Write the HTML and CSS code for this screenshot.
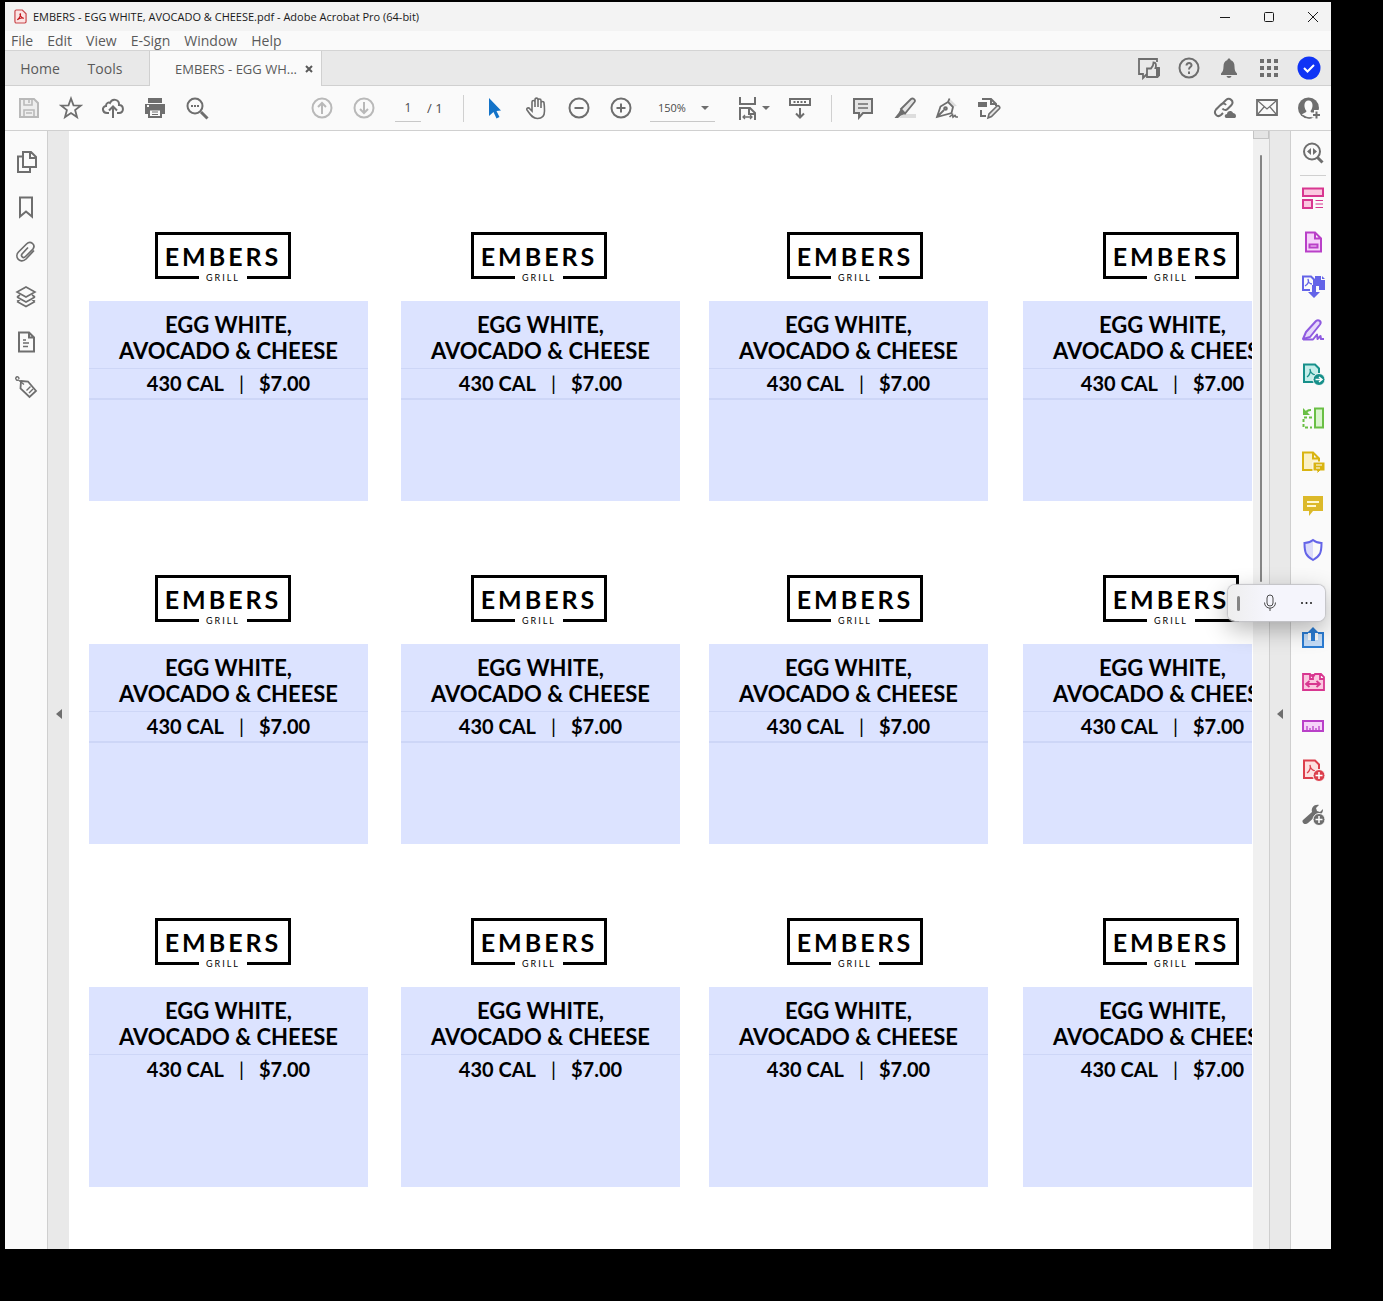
FILE: index.html
```
<!DOCTYPE html>
<html lang="en">
<head>
  <meta charset="UTF-8">
  <meta name="viewport" content="width=device-width, initial-scale=1.0">
  <title>EMBERS - EGG WHITE, AVOCADO &amp; CHEESE.pdf</title>
  <link rel="stylesheet" href="styles.css">
</head>
<body>
  <div class="window">
    <header class="title-bar">
      <svg class="app-icon" viewBox="0 0 14 16"><path d="M2.500 1h6.500l4 4v8.500a1.500 1.500 0 0 1-1.500 1.500h-9A1.500 1.500 0 0 1 1 13.500v-11A1.500 1.500 0 0 1 2.500 1z" fill="#fbe3e3" stroke="#c9474b" stroke-width="1.300"/><path d="M3.500 11.500c2-1 4-4.500 3.500-6.500-1.500 0 0 4.500 3.500 5-2-.8-5 0-7 1.500z" fill="none" stroke="#c4161c" stroke-width="1.200"/></svg>
      <h1 class="title">EMBERS - EGG WHITE, AVOCADO &amp; CHEESE.pdf - Adobe Acrobat Pro (64-bit)</h1>
      <div class="window-buttons">
        <button aria-label="Minimize"><svg viewBox="0 0 12 12"><path d="M1 6.500h10"/></svg></button>
        <button aria-label="Maximize"><svg viewBox="0 0 12 12"><rect x="1.500" y="1.500" width="9" height="9" rx="1"/></svg></button>
        <button aria-label="Close"><svg viewBox="0 0 12 12"><path d="M1 1l10 10M11 1L1 11"/></svg></button>
      </div>
    </header>

    <nav class="menu-bar">
      <button>File</button>
      <button>Edit</button>
      <button>View</button>
      <button>E-Sign</button>
      <button>Window</button>
      <button>Help</button>
    </nav>

    <div class="tab-bar">
      <button class="tab">Home</button>
      <button class="tab">Tools</button>
      <div class="tab-active">
        <span>EMBERS - EGG WH...</span>
        <button aria-label="Close tab"><svg viewBox="0 0 8 8"><path d="M1 1l6 6M7 1L1 7"/></svg></button>
      </div>
      <div class="tab-tools">
        <button aria-label="Feedback"><svg class="icon" viewBox="0 0 24 24"><path d="M20 6V3H2v15h4v4l4-4" stroke-width="1.800"/><path d="M10 12.500h4c1.500-1.500 2.500-3 2.500-6 2.500 0 3 2.500 2 5.500H22v7.500l-1.500 1.500H10z" fill="#e9e9e9" stroke-width="1.800"/><path d="M19 12h4v8h-4z" fill="#6e6e6e" stroke="none"/></svg></button>
        <button aria-label="Help"><svg class="icon" viewBox="0 0 24 24"><circle cx="12" cy="12" r="9.500"/><path d="M9.500 9.500c0-3.500 5.500-3 5 0-.3 1.700-2.500 1.700-2.500 4M12 15.500V18"/></svg></button>
        <button aria-label="Notifications"><svg class="icon solid" viewBox="0 0 24 24"><path d="M12 2.500c1 0 1.500.5 1.500 1.500 3 .8 4 3.500 4 6.500 0 4 1 5.500 2.500 7V19H4v-1.500c1.500-1.500 2.500-3 2.500-7 0-3 1-5.700 4-6.500 0-1 .5-1.500 1.500-1.500zM9.500 20h5c-.5 2.500-4.500 2.500-5 0z"/></svg></button>
        <button aria-label="Apps"><svg class="icon solid" viewBox="0 0 24 24"><path d="M3 3h4v4H3zM10 3h4v4h-4zM17 3h4v4h-4zM3 10h4v4H3zM10 10h4v4h-4zM17 10h4v4h-4zM3 17h4v4H3zM10 17h4v4h-4zM17 17h4v4h-4z"/></svg></button>
        <button aria-label="Account"><svg class="icon" viewBox="0 0 24 24"><circle cx="12" cy="12" r="11.500" fill="#1034f5" stroke="none"/><path d="M7 12l3.500 3.500L17 9" stroke="#fff"/></svg></button>
      </div>
    </div>

    <div class="toolbar">
      <div class="tool-group">
        <button aria-label="Save"><svg class="icon faded" viewBox="0 0 24 24"><path d="M3 3h14l4 4v14H3z" fill="#eee"/><path d="M7 3v6h8V3M12 4v3M7 21v-7h10v7M9 17h6" stroke-width="1.600"/></svg></button>
        <button aria-label="Star"><svg class="icon" viewBox="0 0 24 24"><path d="M12 2.500l2.500 6.800 7.200.3-5.600 4.500 1.900 7-6-4-6 4 1.900-7-5.600-4.500 7.200-.3z" stroke-width="1.800"/></svg></button>
        <button aria-label="Upload"><svg class="icon" viewBox="0 0 24 24"><path d="M8 17H6c-5 0-5.500-6.500-1-7 0-3 2.500-4 4-3 2-5 9.500-4 9 2 5 0 5.500 8 0 8h-2M12 22V11M8 14.500l4-4 4 4"/></svg></button>
        <button aria-label="Print"><svg class="icon" viewBox="0 0 24 24"><path d="M5 2h14v5H5z" fill="#6e6e6e" stroke="none"/><path d="M2 8h20v10H2z" fill="#6e6e6e" stroke="none"/><path d="M6 13.500h12V21H6z" fill="#fafafa"/><path d="M4 10h2" stroke="#fafafa"/><path d="M9 16h6M9 18.500h6" stroke-width="1"/></svg></button>
        <button aria-label="Find"><svg class="icon" viewBox="0 0 24 24"><circle cx="10" cy="10" r="7.500"/><path d="M16 16l6.500 6.500" stroke-width="3"/><path d="M6 10h2M9 10h2M12 10h2"/></svg></button>
      </div>
      <div class="tool-group page-group">
        <button aria-label="Previous page"><svg class="icon faded" viewBox="0 0 24 24"><circle cx="12" cy="12" r="9.500"/><path d="M12 18V7M8 11l4-4 4 4"/></svg></button>
        <button aria-label="Next page"><svg class="icon faded" viewBox="0 0 24 24"><circle cx="12" cy="12" r="9.500"/><path d="M12 6v11M8 13l4 4 4-4"/></svg></button>
        <input class="page-input" id="page" type="text" value="1" aria-label="Page">
        <label class="page-total" for="page">/ 1</label>
      </div>
      <div class="tool-group divided">
        <button aria-label="Select"><svg class="icon" viewBox="0 0 24 24"><path d="M6 2l12 12.500-4.500.5 3 6-3 1.500-3-6.500L6 20z" fill="#1473c8" stroke="none"/></svg></button>
        <button aria-label="Hand"><svg class="icon" viewBox="0 0 24 24"><path d="M7 15V6c0-2 3-2 3 0v5V4c0-2.500 3-2.500 3 0v7V4.500c0-2 3-2 3 0V12 7c0-2 3-2 3 0 .5 3 .5 6 .5 8 0 5-3 7.500-7 7.500C7 22.500 5 18 2 14c-1-2 1.500-3 3-1l2 2z" stroke-width="1.600"/></svg></button>
        <button aria-label="Zoom out"><svg class="icon" viewBox="0 0 24 24"><circle cx="12" cy="12" r="9.500"/><path d="M7.500 12h9"/></svg></button>
        <button aria-label="Zoom in"><svg class="icon" viewBox="0 0 24 24"><circle cx="12" cy="12" r="9.500"/><path d="M7.500 12h9M12 7.500v9"/></svg></button>
      </div>
      <div class="zoom">
        <select aria-label="Zoom"><option>150%</option></select>
        <svg class="caret" viewBox="0 0 8 4"><path d="M0 0h8L4 4z"/></svg>
      </div>
      <div class="tool-group">
        <button class="fit-button" aria-label="Fit width"><svg class="icon" viewBox="0 0 24 24"><path d="M4 1v7h15V1M4 24V12h10l5 5v7M13 12v6h6"/><path d="M7 21h9M9 19l-2 2 2 2M14 19l2 2-2 2" stroke-width="1.300"/></svg><svg class="caret" viewBox="0 0 8 4"><path d="M0 0h8L4 4z"/></svg></button>
        <button aria-label="Scroll mode"><svg class="icon" viewBox="0 0 24 24"><path d="M2 3h20v6H2z"/><path d="M5.500 6h2M9 6h2M12.500 6h2M16 6h2M12 12v9M8 17.500l4 4 4-4"/></svg></button>
      </div>
      <div class="tool-group divided">
        <button aria-label="Comment"><svg class="icon" viewBox="0 0 24 24"><path d="M3 3h18v14h-9l-4 4.500V17H3z" fill="#e4e4e4"/><path d="M7 8h10M7 12h10" stroke-width="1.300"/></svg></button>
        <button aria-label="Highlight"><svg class="icon" viewBox="0 0 24 24"><path d="M10 18h13v4H6z" fill="#ddd" stroke="none"/><path d="M8 13L18 3c2-1.500 5 1 3.500 3L12 17.500z" fill="#e4e4e4" stroke-width="1.800"/><path d="M8 12.500l5 5-5 2-3 2.500H1.500l4-5z" fill="#6e6e6e" stroke="none"/></svg></button>
        <button aria-label="Sign"><svg class="icon" viewBox="0 0 24 24"><path d="M14 2l8 8-4 .5L13.500 6z" fill="#ddd" stroke="none"/><path d="M14.500 2.500L13 6l5 5-1.500 6L2 21l3.500-10.500L13 6M2.500 20.500L9 14" stroke-width="1.800"/><circle cx="10.500" cy="12.500" r="1.300"/><path d="M14.500 21l3-2.500.5 2.500 2-1.500 1 1.500h2" stroke-width="1.600"/></svg></button>
        <button aria-label="Edit page"><svg class="icon" viewBox="0 0 24 24"><path d="M5 3h9l5 5v2M14 3v5h5M4 14v6h5"/><path d="M1 6h9v5H1z" fill="#6e6e6e" stroke="none"/><path d="M11 22l1-4 8-8c1.500-1 3.500 1 2.500 2.500l-8 8z" fill="#e4e4e4" stroke-width="1.600"/></svg></button>
      </div>
      <div class="tool-group share-group">
        <button aria-label="Share link"><svg class="icon" viewBox="0 0 24 24"><path d="M8 9l5-5c3.500-3 8.500 1 5.500 5l-4 4c-1.500 1.500-4 1-5-.5M13 9c-1-1.500-3.500-2-5-.5l-5 5c-3 4 1.500 8.500 5 5.500l2-2"/><path d="M13 22c-2-1-1.500-4 1-4 0-3.500 5-4 6-1 3 0 4 4 2 5z" fill="#6e6e6e" stroke="none"/></svg></button>
        <button aria-label="Email"><svg class="icon" viewBox="0 0 24 24"><path d="M2 4h20v15H2z" stroke-width="1.800"/><path d="M3 5l9 8 9-8M3 18l6-7M21 18l-6-7" stroke-width="1.200"/></svg></button>
        <button aria-label="Add people"><svg class="icon" viewBox="0 0 24 24"><circle cx="11.500" cy="12" r="10.500" fill="#6e6e6e" stroke="none"/><path d="M5 18.500c1.500-1.500 4.500-1.800 4.500-3.500-3-3-3-10.500 2-10.500s5 7.500 2 10.500c0 1.700 2 2 4 3v3c-4 1.500-9 1-12.500-2.500z" fill="#fafafa" stroke="none"/><path d="M6 19.500c3.500 3 8 3 10.500 1" stroke-width="1.500"/><path d="M19.500 14v10M14.500 19h10" stroke="#fafafa" stroke-width="5"/><path d="M19.500 15.500v7M16 19h7"/></svg></button>
      </div>
    </div>

    <main class="workspace">
      <aside class="rail rail-left">
        <button aria-label="Pages"><svg class="icon" viewBox="0 0 24 24"><path d="M9 2h8l5 5v10H9zM16 2v6h6M9 6.500H4V22h12v-5"/></svg></button>
        <button aria-label="Bookmarks"><svg class="icon" viewBox="0 0 24 24"><path d="M6 2.500h12v19l-6-5-6 5z"/></svg></button>
        <button aria-label="Attachments"><svg class="icon" viewBox="0 0 24 24"><path d="M20 10.500l-8 8.500c-3 3-6.500 2-8 0s-1.500-5 .5-7l8-8c4-4 9.500.5 6.500 5l-7.500 7.500c-2.500 2.500-5-.5-3.500-2.500l6-6.500" stroke-width="1.700"/></svg></button>
        <button aria-label="Layers"><svg class="icon" viewBox="0 0 24 24"><path d="M12 2l9 5-9 5-9-5zM3 12l9 5 9-5M3 16.500l9 5 9-5M3 12l3-2M21 12l-3-2M3 16.500l3-2M21 16.500l-3-2" stroke-width="1.600"/></svg></button>
        <button aria-label="Content"><svg class="icon" viewBox="0 0 24 24"><path d="M5 2.500h10l5 5v14H5zM15 2.500v5h5"/><path d="M9 10h3M9 13h6M9 16.500h5" stroke-width="1.300"/></svg></button>
        <button aria-label="Tags"><svg class="icon" viewBox="0 0 24 24"><path d="M7 6l7 .5 8 9.500-6.500 6L6.500 13.500z" stroke-width="1.800"/><path d="M10 9.500L4.500 5C3 6 1 4 2 2.500S5 2 5 4M12.500 15.500l4-4M15 18l4-4" stroke-width="1.400"/></svg></button>
      </aside>
      <button class="gutter gutter-left" aria-label="Show left panel"><svg viewBox="0 0 6 10"><path d="M6 0v10L0 5z"/></svg></button>

      <section class="page">
        <div class="logo-row">
          <div class="logo"><strong>EMBERS</strong><small>GRILL</small></div>
          <div class="logo"><strong>EMBERS</strong><small>GRILL</small></div>
          <div class="logo"><strong>EMBERS</strong><small>GRILL</small></div>
          <div class="logo"><strong>EMBERS</strong><small>GRILL</small></div>
        </div>
        <div class="card-row">
          <div class="card"><h2>EGG WHITE,<br>AVOCADO &amp; CHEESE</h2><p><b>430 CAL</b><span>|</span><b>$7.00</b></p></div>
          <div class="card"><h2>EGG WHITE,<br>AVOCADO &amp; CHEESE</h2><p><b>430 CAL</b><span>|</span><b>$7.00</b></p></div>
          <div class="card"><h2>EGG WHITE,<br>AVOCADO &amp; CHEESE</h2><p><b>430 CAL</b><span>|</span><b>$7.00</b></p></div>
          <div class="card"><h2>EGG WHITE,<br>AVOCADO &amp; CHEESE</h2><p><b>430 CAL</b><span>|</span><b>$7.00</b></p></div>
        </div>
        <div class="logo-row">
          <div class="logo"><strong>EMBERS</strong><small>GRILL</small></div>
          <div class="logo"><strong>EMBERS</strong><small>GRILL</small></div>
          <div class="logo"><strong>EMBERS</strong><small>GRILL</small></div>
          <div class="logo"><strong>EMBERS</strong><small>GRILL</small></div>
        </div>
        <div class="card-row">
          <div class="card"><h2>EGG WHITE,<br>AVOCADO &amp; CHEESE</h2><p><b>430 CAL</b><span>|</span><b>$7.00</b></p></div>
          <div class="card"><h2>EGG WHITE,<br>AVOCADO &amp; CHEESE</h2><p><b>430 CAL</b><span>|</span><b>$7.00</b></p></div>
          <div class="card"><h2>EGG WHITE,<br>AVOCADO &amp; CHEESE</h2><p><b>430 CAL</b><span>|</span><b>$7.00</b></p></div>
          <div class="card"><h2>EGG WHITE,<br>AVOCADO &amp; CHEESE</h2><p><b>430 CAL</b><span>|</span><b>$7.00</b></p></div>
        </div>
        <div class="logo-row">
          <div class="logo"><strong>EMBERS</strong><small>GRILL</small></div>
          <div class="logo"><strong>EMBERS</strong><small>GRILL</small></div>
          <div class="logo"><strong>EMBERS</strong><small>GRILL</small></div>
          <div class="logo"><strong>EMBERS</strong><small>GRILL</small></div>
        </div>
        <div class="card-row last">
          <div class="card"><h2>EGG WHITE,<br>AVOCADO &amp; CHEESE</h2><p><b>430 CAL</b><span>|</span><b>$7.00</b></p></div>
          <div class="card"><h2>EGG WHITE,<br>AVOCADO &amp; CHEESE</h2><p><b>430 CAL</b><span>|</span><b>$7.00</b></p></div>
          <div class="card"><h2>EGG WHITE,<br>AVOCADO &amp; CHEESE</h2><p><b>430 CAL</b><span>|</span><b>$7.00</b></p></div>
          <div class="card"><h2>EGG WHITE,<br>AVOCADO &amp; CHEESE</h2><p><b>430 CAL</b><span>|</span><b>$7.00</b></p></div>
        </div>
      </section>

      <div class="scrollbar">
        <div class="split-handle"></div>
        <div class="thumb"></div>
      </div>
      <button class="gutter gutter-right" aria-label="Hide tools"><svg viewBox="0 0 6 10"><path d="M6 0v10L0 5z"/></svg></button>

      <aside class="rail rail-right">
        <button class="search-tool" aria-label="Search tools"><svg class="icon" viewBox="0 0 24 24"><circle cx="11" cy="10.500" r="8"/><path d="M16.500 16.500l5 5" stroke-width="3"/><path d="M10 7v7l-4-3.500zM12 7v7l4-3.500z" fill="#6e6e6e" stroke="none"/></svg></button>
        <button aria-label="Edit PDF"><svg class="icon pink" viewBox="0 0 24 24"><path d="M2 2.500h20v7.500H2zM2 14h9v8H2z"/><path d="M14.500 14.500H22M14.500 18H22M14.500 21.500H22" stroke-width="1.200"/></svg></button>
        <button aria-label="Create form"><svg class="icon purple" viewBox="0 0 24 24"><path d="M5 2.500h9l6 6v13H5zM14 2.500v6h6M8.500 14.500h8v3h-8z"/></svg></button>
        <button aria-label="Combine files"><svg class="icon indigo" viewBox="0 0 24 24"><path d="M9 16H2V2.500h8l3 3V11" fill="none"/><path d="M4 12c3-2 4-5 3-7 0 3 2 5 4 5" fill="none" stroke-width="1.300"/><path d="M14 2h6v4h4v10h-6v-4h-4zM21 2l3 3h-3zM11 11h4v7h4l-6 6-6-6h4z" fill="#6464e8" stroke="none"/></svg></button>
        <button aria-label="Fill and sign"><svg class="icon violet" viewBox="0 0 24 24"><path d="M2 21l3-7L15 3c2.500-2 6 .5 4 3.500L9 19z" stroke-linejoin="round"/><path d="M2 21.500h10l4-5 .5 4.500 3-3 .5 3h3" fill="none" stroke-linejoin="round"/></svg></button>
        <button aria-label="Export PDF"><svg class="icon teal" viewBox="0 0 24 24"><path d="M3 2.500h11l4 4V20H3z"/><path d="M6 15c3-2 4-6 3-8 0 4 2 5 5 6" stroke-width="1.300"/><circle cx="18" cy="17.500" r="6" fill="#17908a" stroke="#fafafa" stroke-width="1"/><path d="M14.500 17.500h6M18 15l3 2.500-3 2.500" fill="none" stroke="#fff" stroke-width="1.500"/></svg></button>
        <button aria-label="Organize pages"><svg class="icon green" viewBox="0 0 24 24"><path d="M14 2.500h8v19h-8z"/><path d="M11 11.500H2.500v10H11" stroke-dasharray="3 2" fill="none"/><path d="M5 8c0-3 2-4 5-4" fill="none"/><path d="M2 2v7h7z" fill="#6abf45" stroke="none"/></svg></button>
        <button aria-label="Send for comments"><svg class="icon yellow" viewBox="0 0 24 24"><path d="M2 2.500h10l6 6V20H2zM12 2.500v6h6"/><path d="M12 12h12v9h-5l-3 3v-3h-4z" fill="#d9b411" stroke="#fafafa" stroke-width="1"/><path d="M15 15h6M15 18h4" stroke="#fff" stroke-width="1.200"/></svg></button>
        <button aria-label="Comment tool"><svg class="icon" viewBox="0 0 24 24"><path d="M2 2h20v15H12l-4 5v-5H2z" fill="#dcb92a" stroke="none"/><path d="M6 8h12M6 12h9" stroke="#fff8d0"/></svg></button>
        <button aria-label="Protect"><svg class="icon indigo" viewBox="0 0 24 24"><path d="M12 2v20C6 19 3.500 16 3.500 5z" fill="#dcdcfa" stroke="none"/><path d="M12 2c2.500 2 5 3 8.500 3 0 10-1.500 13-8.500 17C5 18 3.500 15 3.500 5 7 5 9.500 4 12 2z" fill="none"/></svg></button>
        <button aria-label="Compress"><svg class="icon pink" viewBox="0 0 24 24"><path d="M5 6h14v12H5z"/></svg></button>
        <button aria-label="Share"><svg class="icon blue" viewBox="0 0 24 24"><path d="M7 7H2v14h20V7h-5v7H7z" stroke="none"/><path d="M7 7H2v14h20V7h-5" fill="none"/><path d="M12 1l6 6h-4v8h-4V7H6z" fill="#2b7cd3" stroke="none"/></svg></button>
        <button aria-label="Compare files"><svg class="icon pink" viewBox="0 0 24 24"><path d="M2 4h7l3 3 2-3h6l3 3v13H2zM9 4v5h3V4M19 4v5h4" stroke-width="1.800"/><path d="M5 14h14M8.500 11L5 14l3.500 3M15.500 11l3.500 3-3.500 3" fill="none" stroke-width="1.800"/></svg></button>
        <button aria-label="Measure"><svg class="icon purple" viewBox="0 0 24 24"><path d="M2 7h20v10H2z"/><path d="M6 16v-4M9 16v-2M12 16v-4M15 16v-2M18 16v-4" stroke-width="1.300"/></svg></button>
        <button aria-label="Create PDF"><svg class="icon red" viewBox="0 0 24 24"><path d="M3 2.500h11l4 4V20H3z"/><path d="M6 15c3-2 4-6 3-8 0 4 2 5 5 6" stroke-width="1.300"/><circle cx="18" cy="17.500" r="6" fill="#dc3f4c" stroke="#fafafa" stroke-width="1"/><path d="M14.500 17.500h7M18 14v7" fill="none" stroke="#fff" stroke-width="1.500"/></svg></button>
        <button aria-label="More tools"><svg class="icon" viewBox="0 0 24 24"><path d="M2 18l9-8c-1-4 2-8 7-7l-3 3 1 3 3 1 3-3c0 4-2 6-6 6l-9 8c-3 3-7-1-5-3z" fill="#6e6e6e" stroke="none"/><circle cx="18" cy="17.500" r="6" fill="#6e6e6e" stroke="#fafafa" stroke-width="1"/><path d="M14.500 17.500h7M18 14v7" stroke="#fff" stroke-width="1.500"/></svg></button>
      </aside>
    </main>

    <div class="voice-bar">
      <span class="grip"></span>
      <button aria-label="Microphone"><svg viewBox="0 0 16 18"><rect x="5" y="1" width="6" height="11" rx="3"/><path d="M2.500 8.500c0 7.500 11 7.500 11 0M8 14v3"/></svg></button>
      <button aria-label="More"><svg class="dots" viewBox="0 0 16 18"><circle cx="4" cy="9" r="1"/><circle cx="8.500" cy="9" r="1"/><circle cx="13" cy="9" r="1"/></svg></button>
    </div>
  </div>
</body>
</html>
```
FILE: styles.css
```
* {
  box-sizing: border-box;
}

body {
  display: flex;
  margin: 0;
  padding: 2px 52px 52px 5px;
  min-height: 100vh;
  background: #000;
  font-family: "Open Sans", "Noto Sans", sans-serif;
  color: #5a5a5a;
}

button {
  display: flex;
  align-items: center;
  justify-content: center;
  padding: 0;
  border: none;
  background: none;
  font: inherit;
  color: inherit;
}

.window {
  position: relative;
  display: flex;
  flex-direction: column;
  flex: 1;
  min-width: 0;
  background: #fafafa;
}

/* icons */
.icon {
  width: 24px;
  height: 24px;
  flex: none;
  fill: none;
  stroke: #6e6e6e;
  stroke-width: 2;
}

.icon.solid {
  fill: #6e6e6e;
  stroke: none;
}

.icon.faded {
  stroke: #b9b9b9;
}

.icon.pink {
  stroke: #d83790;
  fill: #fbc8e0;
}

.icon.purple {
  stroke: #b940c8;
  fill: #f6d3fa;
}

.icon.indigo {
  stroke: #6464e8;
}

.icon.violet {
  stroke: #8f5be0;
  fill: #e6d8fb;
}

.icon.teal {
  stroke: #17908a;
  fill: #c5eeea;
}

.icon.green {
  stroke: #6abf45;
  fill: #d9f5cd;
}

.icon.yellow {
  stroke: #d9b411;
  fill: #fbf1c5;
}

.icon.blue {
  stroke: #2b7cd3;
  fill: #c4dcf7;
}

.icon.red {
  stroke: #dc3f4c;
  fill: #fde0e0;
}

.caret {
  width: 8px;
  height: 4px;
  fill: #6e6e6e;
}

/* title bar */
.title-bar {
  display: flex;
  align-items: center;
  height: 29px;
  padding-left: 9px;
  background: #f3f3f3;
}

.app-icon {
  width: 13px;
  height: 15px;
}

.title {
  flex: 1;
  margin: 0 0 0 6px;
  font-size: 11px;
  font-weight: 400;
  color: #1a1a1a;
}

.window-buttons {
  display: flex;
  gap: 8px;
}

.window-buttons button {
  width: 36px;
  height: 28px;
}

.window-buttons svg {
  width: 12px;
  height: 12px;
  fill: none;
  stroke: #1a1a1a;
}

/* menu */
.menu-bar {
  display: flex;
  gap: 14px;
  height: 20px;
  padding-left: 6px;
  border-bottom: 1px solid #d4d4d4;
  font-size: 14px;
}

/* tabs */
.tab-bar {
  display: flex;
  height: 35px;
  background: #e9e9e9;
  font-size: 14px;
}

.tab {
  width: 70px;
  border-bottom: 1px solid #d0d0d0;
}

.tab + .tab {
  width: 74px;
  padding-right: 14px;
}

.tab-active {
  display: flex;
  align-items: center;
  gap: 8px;
  padding: 0 8px 0 25px;
  border-left: 1px solid #d0d0d0;
  border-right: 1px solid #d0d0d0;
  background: #fafafa;
  font-size: 13px;
}

.tab-active svg {
  width: 8px;
  height: 8px;
  stroke: #5a5a5a;
  stroke-width: 2;
}

.tab-tools {
  display: flex;
  flex: 1;
  justify-content: flex-end;
  padding-right: 2px;
  border-bottom: 1px solid #d0d0d0;
}

.tab-tools button {
  width: 40px;
}

/* toolbar */
.toolbar {
  display: flex;
  align-items: center;
  height: 45px;
  padding: 0 1px 0 3px;
  border-bottom: 1px solid #d0d0d0;
}

.tool-group {
  display: flex;
  align-items: center;
}

.tool-group button {
  width: 42px;
  height: 42px;
}

.page-group {
  margin-left: 83px;
}

.page-input {
  width: 26px;
  height: 27px;
  margin-left: 10px;
  padding: 0;
  border: none;
  border-bottom: 1px solid #c8c8c8;
  background: none;
  font: 12px "Open Sans", sans-serif;
  color: #4a4a4a;
  text-align: center;
}

.page-total {
  width: 42px;
  padding-left: 6px;
  font-size: 13px;
  color: #4a4a4a;
}

.divided::before {
  content: "";
  width: 1px;
  height: 27px;
  margin-right: 10px;
  background: #d0d0d0;
}

.zoom {
  display: flex;
  align-items: center;
  width: 65px;
  height: 27px;
  margin: 0 12px 0 8px;
  padding: 0 6px 0 8px;
  border-bottom: 1px solid #c8c8c8;
}

.zoom select {
  flex: 1;
  min-width: 0;
  padding: 0;
  border: none;
  background: none;
  appearance: none;
  font: 11px "Open Sans", sans-serif;
  color: #4a4a4a;
}

.tool-group .fit-button {
  width: 52px;
  gap: 2px;
}

.tool-group + .divided {
  margin-left: 10px;
}

.page-group + .divided {
  margin-left: 0;
}

.share-group {
  margin-left: auto;
}

/* workspace */
.workspace {
  display: flex;
  flex: 1;
  min-height: 0;
}

.rail {
  flex: none;
  display: flex;
  flex-direction: column;
}

.rail-left {
  width: 43px;
  padding-top: 8px;
  border-right: 1px solid #cfcfcf;
}

.rail-left button {
  height: 45px;
}

.rail-right {
  width: 41px;
  padding-left: 4px;
  border-left: 1px solid #cfcfcf;
}

.rail-right button {
  height: 44px;
}

.rail-right .search-tool {
  height: 45px;
  margin: 0 5px;
  border-bottom: 1px solid #d0d0d0;
}

.gutter {
  flex: none;
  width: 21px;
  padding-top: 48px;
  background: #e9e9e9;
}

.gutter svg {
  width: 6px;
  height: 10px;
  fill: #6e6e6e;
}

.gutter-right {
  border-left: 1px solid #cfcfcf;
}

.scrollbar {
  flex: none;
  width: 16px;
  background: #f0f0f0;
}

.split-handle {
  height: 8px;
  border: 1px solid #c4c4c4;
  border-top: none;
  background: #e4e4e4;
}

.thumb {
  width: 2px;
  height: 427px;
  margin: 16px auto 0;
  border-radius: 1px;
  background: #858585;
}

/* document */
.page {
  flex: 1;
  min-width: 0;
  padding: 101px 1px 61px 20px;
  overflow: hidden;
  background: #fff;
  font-family: Lato, "Open Sans", sans-serif;
  color: #000;
}

.logo-row {
  display: grid;
  grid-template-columns: repeat(4, 136px);
  gap: 180px;
  padding-left: 66px;
  margin-bottom: 19px;
}

.logo {
  display: flex;
  flex-direction: column;
  align-items: center;
  height: 50px;
}

.logo strong {
  width: 136px;
  height: 47px;
  border: 3px solid #000;
  font-size: 25px;
  line-height: 42px;
  letter-spacing: 3px;
  text-align: center;
}

.logo small {
  width: 48px;
  margin-top: -6px;
  background: #fff;
  font-size: 9px;
  line-height: 10px;
  letter-spacing: 2px;
  text-align: center;
}

.card-row {
  display: grid;
  grid-template-columns: 312px 308px 314px 279px;
  margin-bottom: 74px;
  overflow: hidden;
}

.card-row.last {
  margin-bottom: 0;
}

.card {
  width: 279px;
  height: 200px;
  background: #dce3ff;
  text-align: center;
}

.card h2 {
  margin: 0;
  padding: 11px 0 4px;
  border-bottom: 1px solid #cdd6f7;
  font-size: 22px;
  line-height: 26px;
}

.card p {
  display: flex;
  justify-content: center;
  gap: 15px;
  margin: 0;
  border-bottom: 2px solid #cdd6f7;
  font-size: 20px;
  line-height: 29px;
}

.last .card p {
  border-bottom: none;
}

/* floating dictation bar */
.voice-bar {
  position: absolute;
  top: 583px;
  right: 6px;
  display: flex;
  align-items: center;
  width: 97px;
  height: 36px;
  padding-left: 9px;
  border-radius: 7px;
  background: linear-gradient(90deg, #eee, #f5f5fc 40%);
  box-shadow: 0 0 1px 1px #c4c4c8, 0 8px 24px rgba(0, 0, 0, 0.3);
}

.voice-bar .grip {
  width: 3px;
  height: 15px;
  margin-right: 12px;
  border-radius: 2px;
  background: #858585;
}

.voice-bar button {
  width: 36px;
  height: 36px;
}

.voice-bar svg {
  width: 16px;
  height: 18px;
  fill: none;
  stroke: #4a4a4a;
}

.voice-bar .dots {
  fill: #1a1a1a;
  stroke: none;
}
```
